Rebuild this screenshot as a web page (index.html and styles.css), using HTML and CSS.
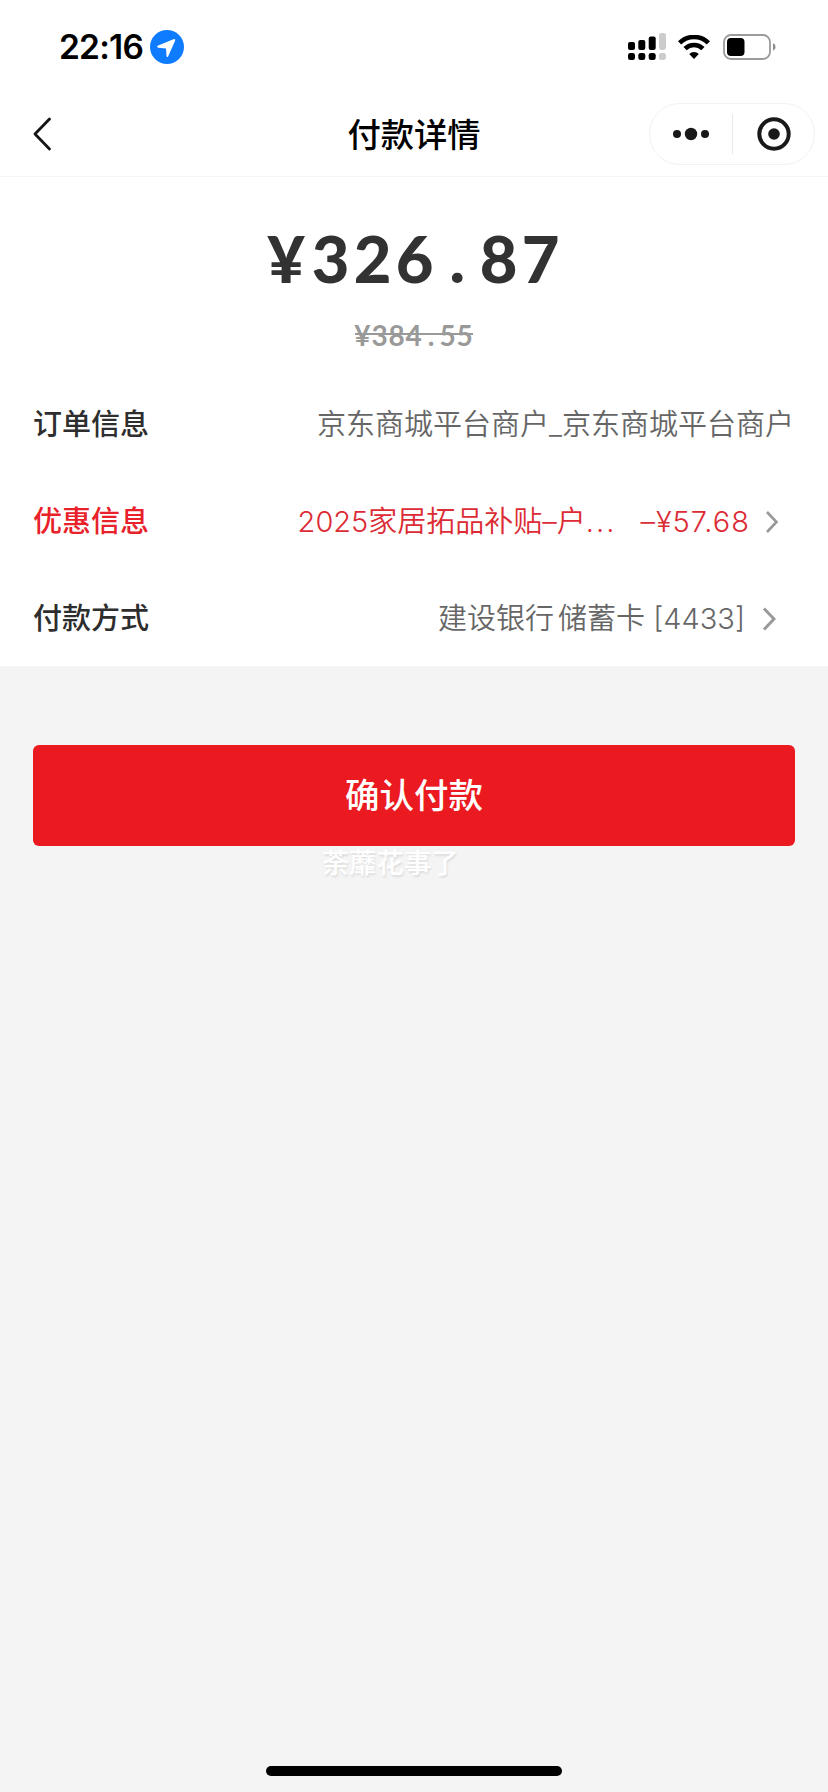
FILE: index.html
```html
<!DOCTYPE html>
<html lang="zh-CN">
<head>
<meta charset="utf-8">
<title>付款详情</title>
<link rel="stylesheet" href="styles.css">
</head>
<body>
<div class="screen">
  <header class="status">
    <span class="time">22:16</span>
    <svg class="location" viewBox="0 0 34 34"><circle cx="17" cy="17" r="17" fill="#0f7bff"/><path d="M7.6 15.8 L23.5 9.2 Q25.8 8.6 25.1 10.8 L18.2 26.2 Q17 28 16.5 26 L16 18.4 L8.2 17.7 Q6.2 17 7.6 15.8Z" fill="#fff"/></svg>
    <svg class="signal" viewBox="0 0 38 28"><g fill="#000"><rect x="0" y="9" width="7" height="8" rx="2"/><rect x="10.3" y="7" width="7" height="10" rx="2"/><rect x="20.7" y="3.5" width="7" height="13.5" rx="2"/><rect x="0" y="20" width="7" height="7" rx="2.3"/><rect x="10.3" y="20" width="7" height="7" rx="2.3"/><rect x="20.7" y="20" width="7" height="7" rx="2.3"/></g><g fill="#ccc"><rect x="31" y="0" width="7" height="17" rx="2.4"/><rect x="31" y="20" width="7" height="7" rx="2.3"/></g></svg>
    <svg class="wifi" viewBox="0 0 32 24"><g fill="none" stroke="#000" stroke-width="4.6"><path d="M1.6 7.9 A20.5 20.5 0 0 1 30.4 7.9"/><path d="M7.1 13.6 A12.7 12.7 0 0 1 24.9 13.6"/></g><path d="M11.2 19 A6.8 6.8 0 0 1 20.8 19 L16 24Z"/></svg>
    <svg class="battery" viewBox="0 0 54 26"><rect x="1" y="1" width="46" height="24" rx="7" fill="none" stroke="#9b9b9b" stroke-width="1.8"/><rect x="4" y="4" width="17.5" height="18" rx="4"/><path d="M50 9.2 Q52.6 10 52.6 13 T50 16.8Z" fill="#8f8f8f"/></svg>
  </header>
  <nav class="nav">
    <svg class="back" viewBox="0 0 20 36"><path d="M16.5 3 L2 18 L16.5 33" fill="none" stroke="#151515" stroke-width="2.8" stroke-linecap="round" stroke-linejoin="round"/></svg>
    <h1 class="title">付款详情</h1>
    <div class="capsule">
      <svg class="more" viewBox="0 0 36 14"><g fill="#191919"><circle cx="4" cy="7" r="4"/><circle cx="18" cy="7" r="6.2"/><circle cx="32" cy="7" r="4"/></g></svg>
      <span class="divider"></span>
      <svg class="close" viewBox="0 0 34 34"><circle cx="17" cy="17" r="14.7" fill="none" stroke="#191919" stroke-width="4"/><circle cx="17" cy="17" r="5.8" fill="#191919"/></svg>
    </div>
  </nav>
  <main class="detail">
    <div class="price"><span class="yen">¥</span>326<span class="point">.</span>87</div>
    <div class="original">¥384<span class="point">.</span>55</div>
    <div class="row">
      <span class="label">订单信息</span>
      <span class="value">京东商城平台商户_京东商城平台商户</span>
    </div>
    <div class="row promo">
      <span class="label">优惠信息</span>
      <span class="value">2025家居拓品补贴–户<span class="dots">...</span></span>
      <span class="saving">–¥57.68</span>
      <svg class="chevron" viewBox="0 0 14 26"><path d="M2 3 L11.5 13 L2 23" fill="none" stroke="#999" stroke-width="2.6"/></svg>
    </div>
    <div class="row method">
      <span class="label">付款方式</span>
      <span class="value">建设银行<span class="bank-gap"></span>储蓄卡 [4433]</span>
      <svg class="chevron" viewBox="0 0 14 26"><path d="M2 2.5 L12 13 L2 23.5" fill="none" stroke="#999" stroke-width="3"/></svg>
    </div>
  </main>
  <button class="pay">确认付款</button>
  <div class="signature">荼蘼花事了</div>
  <div class="home"></div>
</div>
</body>
</html>
```
FILE: styles.css
```css
* { box-sizing: border-box; }
body {
  margin: 0;
  background: #f4f4f4;
  font-family: Inter, "Noto Sans CJK SC", sans-serif;
  color: #2e2e2e;
}
svg { display: block; flex: none; }
.screen { width: 828px; height: 1792px; display: flex; flex-direction: column; }

.status {
  height: 94px;
  padding: 0 51px 0 59px;
  display: flex;
  align-items: center;
  background: #fff;
}
.time { width: 91px; font-size: 33.5px; font-weight: 600; letter-spacing: -0.8px; color: #000; white-space: nowrap; }
.location { width: 34px; height: 34px; }
.signal { width: 38px; height: 28px; margin-left: auto; }
.wifi { width: 32px; height: 24px; margin-left: 12px; }
.battery { width: 54px; height: 26px; margin-left: 13px; }

.nav {
  height: 83px;
  padding: 0 13px 3px 33px;
  display: grid;
  grid-template-columns: 166px 1fr 166px;
  align-items: center;
  background: #fff;
  border-bottom: 1px solid #f5f5f5;
}
.back { width: 20px; height: 36px; }
.title { margin: 2px 0 0; padding-right: 20px; text-align: center; font-size: 33.3px; line-height: 48px; font-weight: 500; color: #000; }
.capsule {
  height: 62px;
  border: 1px solid #f2f2f2;
  border-radius: 31px;
  display: flex;
  align-items: center;
}
.more { width: 36px; height: 14px; margin-left: 23px; }
.divider { width: 1px; height: 40px; margin-left: 23px; background: #e8e8e8; }
.close { width: 34px; height: 34px; margin-left: 24px; }

.detail { height: 489px; padding-top: 43px; background: #fff; }
.price, .original { text-align: center; font-family: Lato, sans-serif; }
.point { display: inline-block; text-align: center; letter-spacing: 0; }
.price { height: 78px; line-height: 77px; padding-left: 3px; font-size: 65px; font-weight: 900; letter-spacing: 4.3px; color: #323232; }
.price .yen { letter-spacing: 7px; }
.price .point { width: 42px; padding-right: 3px; }
.original { height: 36px; margin: 20px 0 22px; line-height: 34px; color: #999; }
.original { font-size: 28px; font-weight: 700; letter-spacing: 0.8px; background: linear-gradient(#999, #999) center 15px / 118px 2px no-repeat; }
.original .point { width: 17px; }
.row {
  height: 97px;
  padding: 0 34px 0 33px;
  display: flex;
  align-items: center;
  font-size: 29px;
  line-height: 42px;
  white-space: nowrap;
}
.label { font-weight: 500; }
.value { margin-left: auto; font-weight: 350; color: #666; }
.promo { padding-right: 49px; }
.promo .label { color: #e8212a; }
.promo .value, .saving { color: #dc2b34; font-weight: 350; }
.dots { letter-spacing: 2px; }
.saving { margin-left: 24px; letter-spacing: 1px; }
.chevron { width: 14px; height: 26px; margin-left: 15px; }
.method { padding-right: 52px; }
.method .chevron { margin-left: 17px; }
.bank-gap { display: inline-block; width: 4px; }

.pay {
  height: 101px;
  margin: 79px 33px 0;
  padding: 0;
  border: 0;
  border-radius: 6px;
  background: #eb1920;
  color: #fff;
  font: 500 34.5px/50px Inter, "Noto Sans CJK SC", sans-serif;
}
.signature {
  margin: -1px 0 0 322px;
  font-size: 27.3px;
  line-height: 38px;
  font-weight: 500;
  color: #fff;
  text-shadow: 1px 2px 2px rgba(0, 0, 0, .09);
}
.home { width: 296px; height: 10px; margin: auto auto 16px; border-radius: 5px; background: #000; }
```
